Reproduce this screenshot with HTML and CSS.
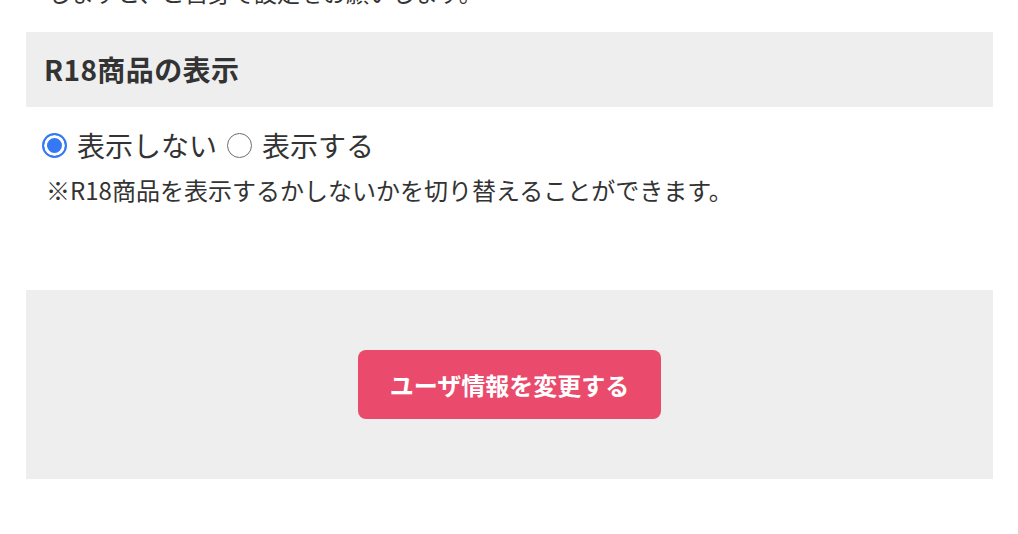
FILE: index.html
```html
<!DOCTYPE html>
<html lang="ja">
<head>
    <meta charset="UTF-8">
    <meta name="viewport" content="width=device-width, initial-scale=1.0">
    <title>ユーザ情報の変更</title>
    <link rel="stylesheet" href="styles.css">
</head>
<body>
    <div class="container">
        <p class="lead">しますと、ご自身で設定をお願いします。</p>

        <h3 class="section-title">R18商品の表示</h3>
        <div class="section-body">
            <div class="radio-row">
                <label><input type="radio" name="r18" value="0" checked> 表示しない</label>
                <label><input type="radio" name="r18" value="1"> 表示する</label>
            </div>
            <p class="note">※R18商品を表示するかしないかを切り替えることができます。</p>
        </div>

        <div class="submit-area">
            <button type="submit" class="submit">ユーザ情報を変更する</button>
        </div>
    </div>
</body>
</html>
```

FILE: styles.css
```css
body {
    margin: 0;
    font-family: "Noto Sans CJK JP", "Noto Sans", sans-serif;
    color: #333;
    background: #fff;
}
.container {
    width: 967px;
    margin-left: 26px;
}
.lead {
    margin: -26px 0 0 0;
    padding-left: 22px;
    font-size: 23px;
    line-height: 36px;
}
.section-title {
    margin: 22px 0 0 0;
    padding: 0 18px;
    height: 75px;
    line-height: 75px;
    background-color: #eeeeee;
    font-size: 28px;
    font-weight: bold;
    letter-spacing: 0.4px;
}
.section-body {
    padding: 18px 16px 0 16px;
}
.radio-row {
    display: flex;
    align-items: center;
    font-size: 28px;
    line-height: 40px;
}
.radio-row label {
    display: flex;
    align-items: center;
    margin-right: 10px;
}
.radio-row input {
    appearance: none;
    width: 25px;
    height: 25px;
    margin: 0 10px 0 0;
    border: 1px solid #6e6e6e;
    border-radius: 50%;
    background: #fff;
}
.radio-row input:checked {
    border: 2px solid #3478f6;
    background: #3478f6;
    box-shadow: inset 0 0 0 3px #fff;
}
.note {
    margin: 7px 0 0 4px;
    font-size: 24px;
    line-height: 36px;
}
.submit-area {
    margin-top: 82px;
    padding: 60px 0;
    background-color: #eeeeee;
    text-align: center;
}
.submit {
    width: 303px;
    height: 69px;
    border: none;
    border-radius: 8px;
    background-color: #ea4a6c;
    color: #fff;
    font-family: inherit;
    font-size: 24px;
    font-weight: bold;
    cursor: pointer;
}
```
